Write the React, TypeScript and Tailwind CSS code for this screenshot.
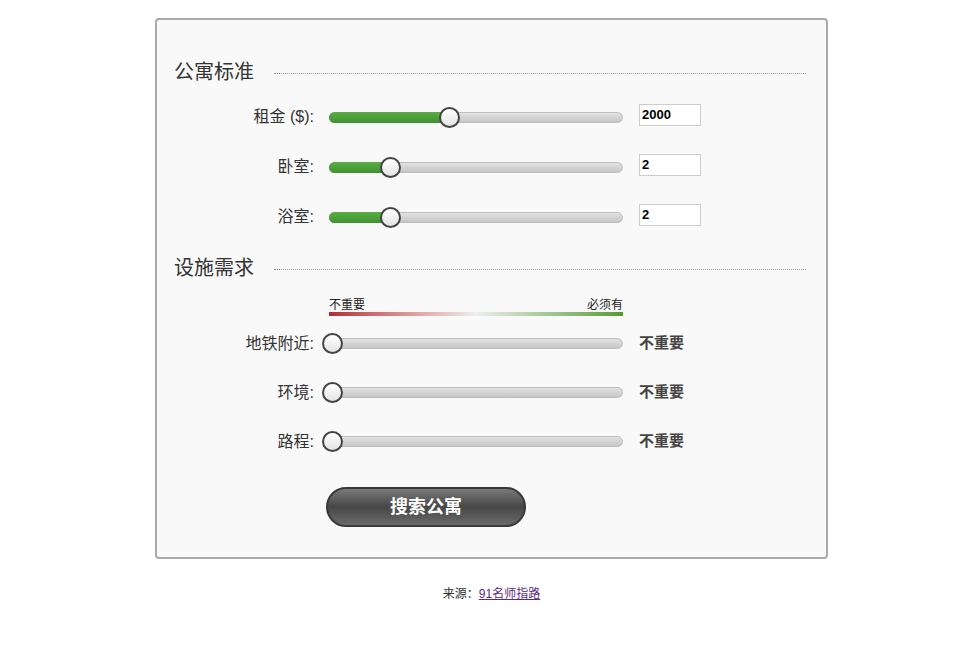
import React from 'react';

const FONT = { fontFamily: '"Liberation Sans", "Noto Sans CJK SC", sans-serif' };

type SliderProps = { fill: number; thumb: number };

const Slider: React.FC<SliderProps> = ({ fill, thumb }) => (
  <div className="relative ml-[15px] h-[11px] w-[294px] rounded-full border border-[#bdbdbd] bg-gradient-to-b from-[#e2e2e2] to-[#c6c6c6]">
    {fill > 0 && (
      <div
        className="absolute left-[-1px] top-[-1px] h-[11px] rounded-l-full bg-gradient-to-b from-[#5aae44] to-[#3f9230]"
        style={{ width: fill }}
      />
    )}
    <div
      className="absolute top-[-6px] h-[21px] w-[21px] rounded-full border-2 border-[#444] bg-gradient-to-b from-[#ffffff] to-[#e4e4e4]"
      style={{ left: thumb }}
    />
  </div>
);

const Heading: React.FC<{ title: string }> = ({ title }) => (
  <div className="flex h-[40px] items-center">
    <span className="text-[20px] leading-none text-[#333]">{title}</span>
    <div className="ml-[20px] mr-[3px] mt-[2px] flex-1 border-t border-dotted border-[#999]" />
  </div>
);

const NumRow: React.FC<{ label: string; value: string; fill: number; thumb: number }> = ({
  label,
  value,
  fill,
  thumb
}) => (
  <div className="flex h-[50px] items-center">
    <span className="w-[140px] text-right text-[16px] text-[#333]">{label}</span>
    <Slider fill={fill} thumb={thumb} />
    <div className="mb-[5px] ml-[16px] flex h-[22px] w-[62px] items-center border border-[#ccc] bg-white pl-[2px] text-[13px] font-bold text-black">
      {value}
    </div>
  </div>
);

const PrefRow: React.FC<{ label: string }> = ({ label }) => (
  <div className="flex h-[49px] items-center">
    <span className="w-[140px] text-right text-[16px] text-[#333]">{label}</span>
    <Slider fill={0} thumb={-8} />
    <span className="ml-[16px] text-[15px] font-bold text-[#444]">不重要</span>
  </div>
);

export default function App() {
  return (
    <div className="min-h-screen bg-white pt-[18px]" style={FONT}>
      <div className="ml-[155px] w-[673px]">
        <div className="rounded-[4px] border-2 border-[#aaa] bg-[#f9f9f9] px-[17px] pb-[30px] pt-[32px]">
          <Heading title="公寓标准" />
          <NumRow label="租金 ($):" value="2000" fill={122} thumb={109} />
          <NumRow label="卧室:" value="2" fill={63} thumb={50} />
          <NumRow label="浴室:" value="2" fill={63} thumb={50} />

          <div className="mt-[6px]">
            <Heading title="设施需求" />
          </div>

          <div className="ml-[155px] mt-[10px] w-[294px]">
            <div className="flex justify-between text-[12px] leading-[14px] text-[#222]">
              <span>不重要</span>
              <span>必须有</span>
            </div>
            <div className="h-[4px] bg-gradient-to-r from-[#b3283a] via-[#eeeeee] to-[#559c2b]" />
          </div>

          <div className="mt-[3px]">
            <PrefRow label="地铁附近:" />
            <PrefRow label="环境:" />
            <PrefRow label="路程:" />
          </div>

          <div className="ml-[152px] mt-[21px]">
            <button className="flex h-[40px] w-[200px] items-center justify-center rounded-full border-2 border-[#3a3a3a] bg-gradient-to-b from-[#7a7a7a] via-[#474747] to-[#6a6a6a] text-[18px] font-bold text-white">
              搜索公寓
            </button>
          </div>
        </div>

        <p className="mt-[26px] text-center text-[12px] text-[#333]">
          来源：<a className="text-[#5a2d82] underline" href="#">91名师指路</a>
        </p>
      </div>
    </div>
  );
}
